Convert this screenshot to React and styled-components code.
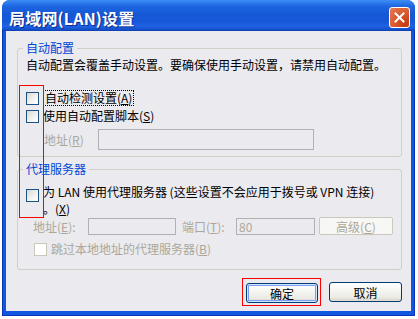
import styled, { createGlobalStyle } from 'styled-components';

const GlobalStyle = createGlobalStyle`
  html, body {
    margin: 0;
    background: #ffffff;
  }
  body {
    font-family: "Noto Sans CJK SC", "Liberation Sans", sans-serif;
    font-size: 12px;
    color: #000000;
  }
`;

const Window = styled.div`
  margin-left: 2px;
  width: 413px;
  height: 316px;
  border-radius: 8px 8px 0 0;
  overflow: hidden;
  display: flex;
  flex-direction: column;
  background: #0b4fd9;
`;

const TitleBar = styled.div`
  height: 31px;
  box-sizing: border-box;
  padding: 4px 5px 0 7px;
  display: flex;
  align-items: center;
  justify-content: space-between;
  background: linear-gradient(
    180deg,
    #3d8cf5 0%,
    #2f7ef0 8%,
    #1d66e0 20%,
    #1558d6 45%,
    #1758d8 70%,
    #1e62e2 85%,
    #1550cc 95%,
    #0c3ca8 100%
  );
`;

const Title = styled.span`
  color: #ffffff;
  font-size: 16px;
  font-weight: 700;
  letter-spacing: 0.2px;
  text-shadow: 1px 1px 0 #0c2a8c;
`;

const CloseButton = styled.span`
  width: 21px;
  height: 21px;
  box-sizing: border-box;
  border: 1px solid #ffffff;
  border-radius: 3px;
  display: grid;
  place-items: center;
  background: radial-gradient(circle at 85% 85%, #c23c10 0%, #d9582b 50%, #e67b58 100%);
`;

const Frame = styled.div`
  flex: 1;
  display: flex;
  padding: 0 4px 5px 4px;
  background: #1056e0;
  box-shadow: inset 1px 0 0 #0a37b8, inset -1px 0 0 #0a37b8, inset 0 -1px 0 #0a37b8;
`;

const Body = styled.div`
  position: relative;
  flex: 1;
  box-sizing: border-box;
  padding: 10px 9px 0 11px;
  background: #ebeaef;
`;

const GroupBox = styled.fieldset`
  margin: ${p => p.$top}px 0 0 0;
  padding: ${p => p.$pt}px 8px ${p => p.$bottom}px 8px;
  border: 1px solid #d0d0c8;
  border-radius: 3px;
  min-width: 0;
`;

const Legend = styled.legend`
  margin-left: -3px;
  padding: 0 3px;
  color: #0046d5;
  line-height: 14px;
`;

const Desc = styled.p`
  margin: 0;
  line-height: 14px;
  white-space: nowrap;
`;

const CheckRow = styled.label`
  display: flex;
  align-items: ${p => (p.$top ? 'flex-start' : 'center')};
  gap: 4px;
  min-height: 16px;
  margin-top: ${p => p.$mt}px;
  margin-left: ${p => p.$indent || 0}px;
  color: ${p => (p.$disabled ? '#aca899' : '#000000')};
  line-height: ${p => p.$lh || 14}px;
  white-space: nowrap;
`;

const Box = styled.span`
  flex: none;
  width: 13px;
  height: 13px;
  box-sizing: border-box;
  margin-top: ${p => p.$mt || 0}px;
  border: 1px solid ${p => (p.$disabled ? '#cac8bb' : '#1c5180')};
  background: ${p => (p.$disabled ? '#ffffff' : 'linear-gradient(135deg, #d8d8d2 0%, #f4f4f2 60%, #ffffff 100%)')};
`;

const Focus = styled.span`
  border: 1px dotted #000000;
  padding: 0 1px;
  line-height: 14px;
`;

const FieldRow = styled.div`
  display: flex;
  align-items: center;
  margin-top: ${p => p.$mt}px;
  margin-left: ${p => p.$indent || 0}px;
`;

const FieldLabel = styled.span`
  flex: none;
  width: ${p => p.$w}px;
  margin-left: ${p => p.$ml || 0}px;
  color: #aca899;
  white-space: nowrap;
`;

const TextBox = styled.input`
  box-sizing: border-box;
  width: ${p => p.$w}px;
  height: ${p => p.$h}px;
  margin: 0;
  padding: 0 2px;
  border: 1px solid #b2b0b4;
  background: transparent;
  font: inherit;
  &:disabled {
    color: #aca899;
  }
`;

const SmallButton = styled.button`
  box-sizing: border-box;
  width: 74px;
  height: 18px;
  margin: 0 0 0 4px;
  padding: 0;
  border: 1px solid #cac8bb;
  border-radius: 2px;
  background: #f7f7f5;
  font: inherit;
  &:disabled {
    color: #aca899;
  }
`;

const ButtonRow = styled.div`
  display: flex;
  justify-content: flex-end;
  align-items: center;
  gap: 8px;
  margin-top: 8px;
`;

const Marked = styled.span`
  display: flex;
  padding: 4px 2px 2px 3px;
  border: 1px solid #ff0000;
`;

const DialogButton = styled.button`
  box-sizing: border-box;
  width: ${p => p.$w}px;
  height: 20px;
  margin: 0;
  padding: 0;
  border: 1px solid #003c74;
  border-radius: 3px;
  background: linear-gradient(180deg, #ffffff 0%, #f5f5f2 40%, #ebeae5 80%, #d6d0c5 100%);
  box-shadow: ${p =>
    p.$default
      ? 'inset 0 0 0 1px #cee7ff, inset 0 0 0 2px #7d9ef0'
      : 'inset 0 -1px 0 #e0ddd4'};
  font: inherit;
  color: #000000;
`;

const Highlight = styled.span`
  position: absolute;
  left: 13px;
  top: 54px;
  width: 25px;
  height: 133px;
  box-sizing: border-box;
  border: 1px solid #ff0000;
  pointer-events: none;
`;

function CloseGlyph() {
  return (
    <svg width="11" height="11" viewBox="0 0 11 11">
      <path d="M1.5 1.5 L9.5 9.5 M9.5 1.5 L1.5 9.5" stroke="#ffffff" strokeWidth="2" strokeLinecap="square" />
    </svg>
  );
}

export default function App() {
  return (
    <>
      <GlobalStyle />
      <Window>
        <TitleBar>
          <Title>局域网(LAN)设置</Title>
          <CloseButton>
            <CloseGlyph />
          </CloseButton>
        </TitleBar>
        <Frame>
          <Body>
            <GroupBox $top={0} $pt={3} $bottom={6}>
              <Legend>自动配置</Legend>
              <Desc>自动配置会覆盖手动设置。要确保使用手动设置，请禁用自动配置。</Desc>
              <CheckRow $mt={18}>
                <Box />
                <Focus>自动检测设置(<u>A</u>)</Focus>
              </CheckRow>
              <CheckRow $mt={2}>
                <Box />
                <span>使用自动配置脚本(<u>S</u>)</span>
              </CheckRow>
              <FieldRow $mt={5} $indent={18}>
                <FieldLabel $w={54}>地址(<u>R</u>)</FieldLabel>
                <TextBox $w={216} $h={21} disabled />
              </FieldRow>
            </GroupBox>

            <GroupBox $top={5} $pt={1} $bottom={12}>
              <Legend>代理服务器</Legend>
              <CheckRow $mt={6} $lh={17} $top>
                <Box $mt={6} />
                <span>
                  为 LAN 使用代理服务器 (这些设置不会应用于拨号或 VPN 连接)
                  <br />
                  。(<u>X</u>)
                </span>
              </CheckRow>
              <FieldRow $mt={0} $indent={7}>
                <FieldLabel $w={55}>地址(<u>E</u>):</FieldLabel>
                <TextBox $w={88} $h={17} disabled />
                <FieldLabel $w={54} $ml={6}>端口(<u>T</u>):</FieldLabel>
                <TextBox $w={79} $h={17} defaultValue="80" disabled />
                <SmallButton disabled>高级(<u>C</u>)</SmallButton>
              </FieldRow>
              <CheckRow $mt={6} $indent={8} $disabled>
                <Box $disabled />
                <span>跳过本地地址的代理服务器(<u>B</u>)</span>
              </CheckRow>
            </GroupBox>

            <ButtonRow>
              <Marked>
                <DialogButton $w={72} $default>确定</DialogButton>
              </Marked>
              <DialogButton $w={73}>取消</DialogButton>
            </ButtonRow>

            <Highlight />
          </Body>
        </Frame>
      </Window>
    </>
  );
}
